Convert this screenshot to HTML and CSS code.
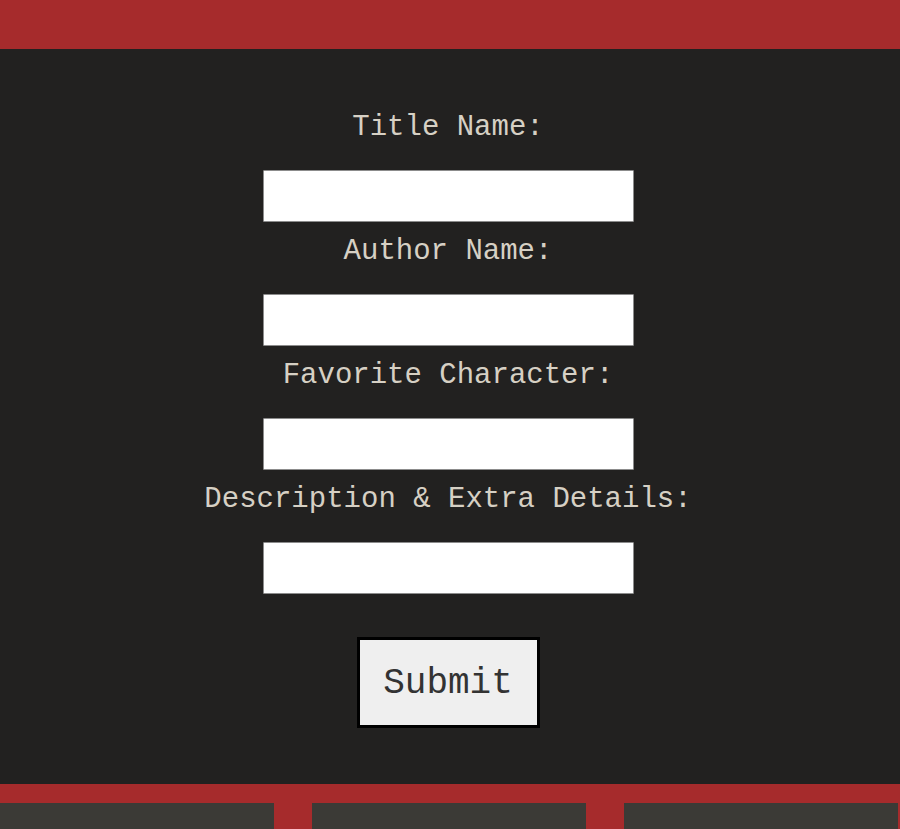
FILE: index.html
```html
<!DOCTYPE html>
<html lang="en">
<head>
<meta charset="utf-8">
<title>Book Form</title>
<link rel="stylesheet" href="styles.css">
</head>
<body>
<header class="topbar"></header>
<main class="content">
  <form class="book-form">
    <div class="field">
      <label class="field-label" for="title">Title Name:</label>
      <input class="field-input" id="title" type="text">
    </div>
    <div class="field">
      <label class="field-label" for="author">Author Name:</label>
      <input class="field-input" id="author" type="text">
    </div>
    <div class="field">
      <label class="field-label" for="character">Favorite Character:</label>
      <input class="field-input" id="character" type="text">
    </div>
    <div class="field">
      <label class="field-label" for="details">Description &amp; Extra Details:</label>
      <input class="field-input" id="details" type="text">
    </div>
    <button class="submit-btn" type="button">Submit</button>
  </form>
</main>
<footer class="footer">
  <div class="footer-box"></div>
  <div class="footer-box"></div>
  <div class="footer-box"></div>
</footer>
</body>
</html>
```
FILE: styles.css
```css
html, body {
  margin: 0;
  padding: 0;
  background: #222120;
  font-family: "Liberation Mono", "Courier New", monospace;
}

.topbar {
  height: 49px;
  background: #a62b2c;
}

.content {
  background: #222120;
  padding: 59px 4px 56px 0;
}

.book-form {
  display: flex;
  flex-direction: column;
  align-items: center;
}

.field {
  display: flex;
  flex-direction: column;
  align-items: center;
  margin-bottom: 10px;
}

.field-label {
  color: #d6d0c4;
  font-size: 29px;
  line-height: 34px;
  height: 34px;
  padding-top: 3px;
  margin-bottom: 25px;
}

.field-input {
  box-sizing: border-box;
  width: 371px;
  height: 52px;
  margin: 0;
  background: #ffffff;
  border: 1px solid #8c8c8c;
  border-radius: 1px;
  padding: 0 6px;
  font-family: inherit;
  font-size: 20px;
}

.submit-btn {
  box-sizing: border-box;
  margin-top: 33px;
  width: 183px;
  height: 91px;
  background: #efefef;
  border: 3px solid #000000;
  color: #333333;
  font-family: "Liberation Mono", "Courier New", monospace;
  font-size: 36px;
  padding: 2px 0 0;
}

.footer {
  background: #a62b2c;
  padding: 19px 2px 0 0;
  display: flex;
  gap: 38px;
}

.footer-box {
  flex: 1;
  height: 40px;
  background: #3b3a36;
}
```
